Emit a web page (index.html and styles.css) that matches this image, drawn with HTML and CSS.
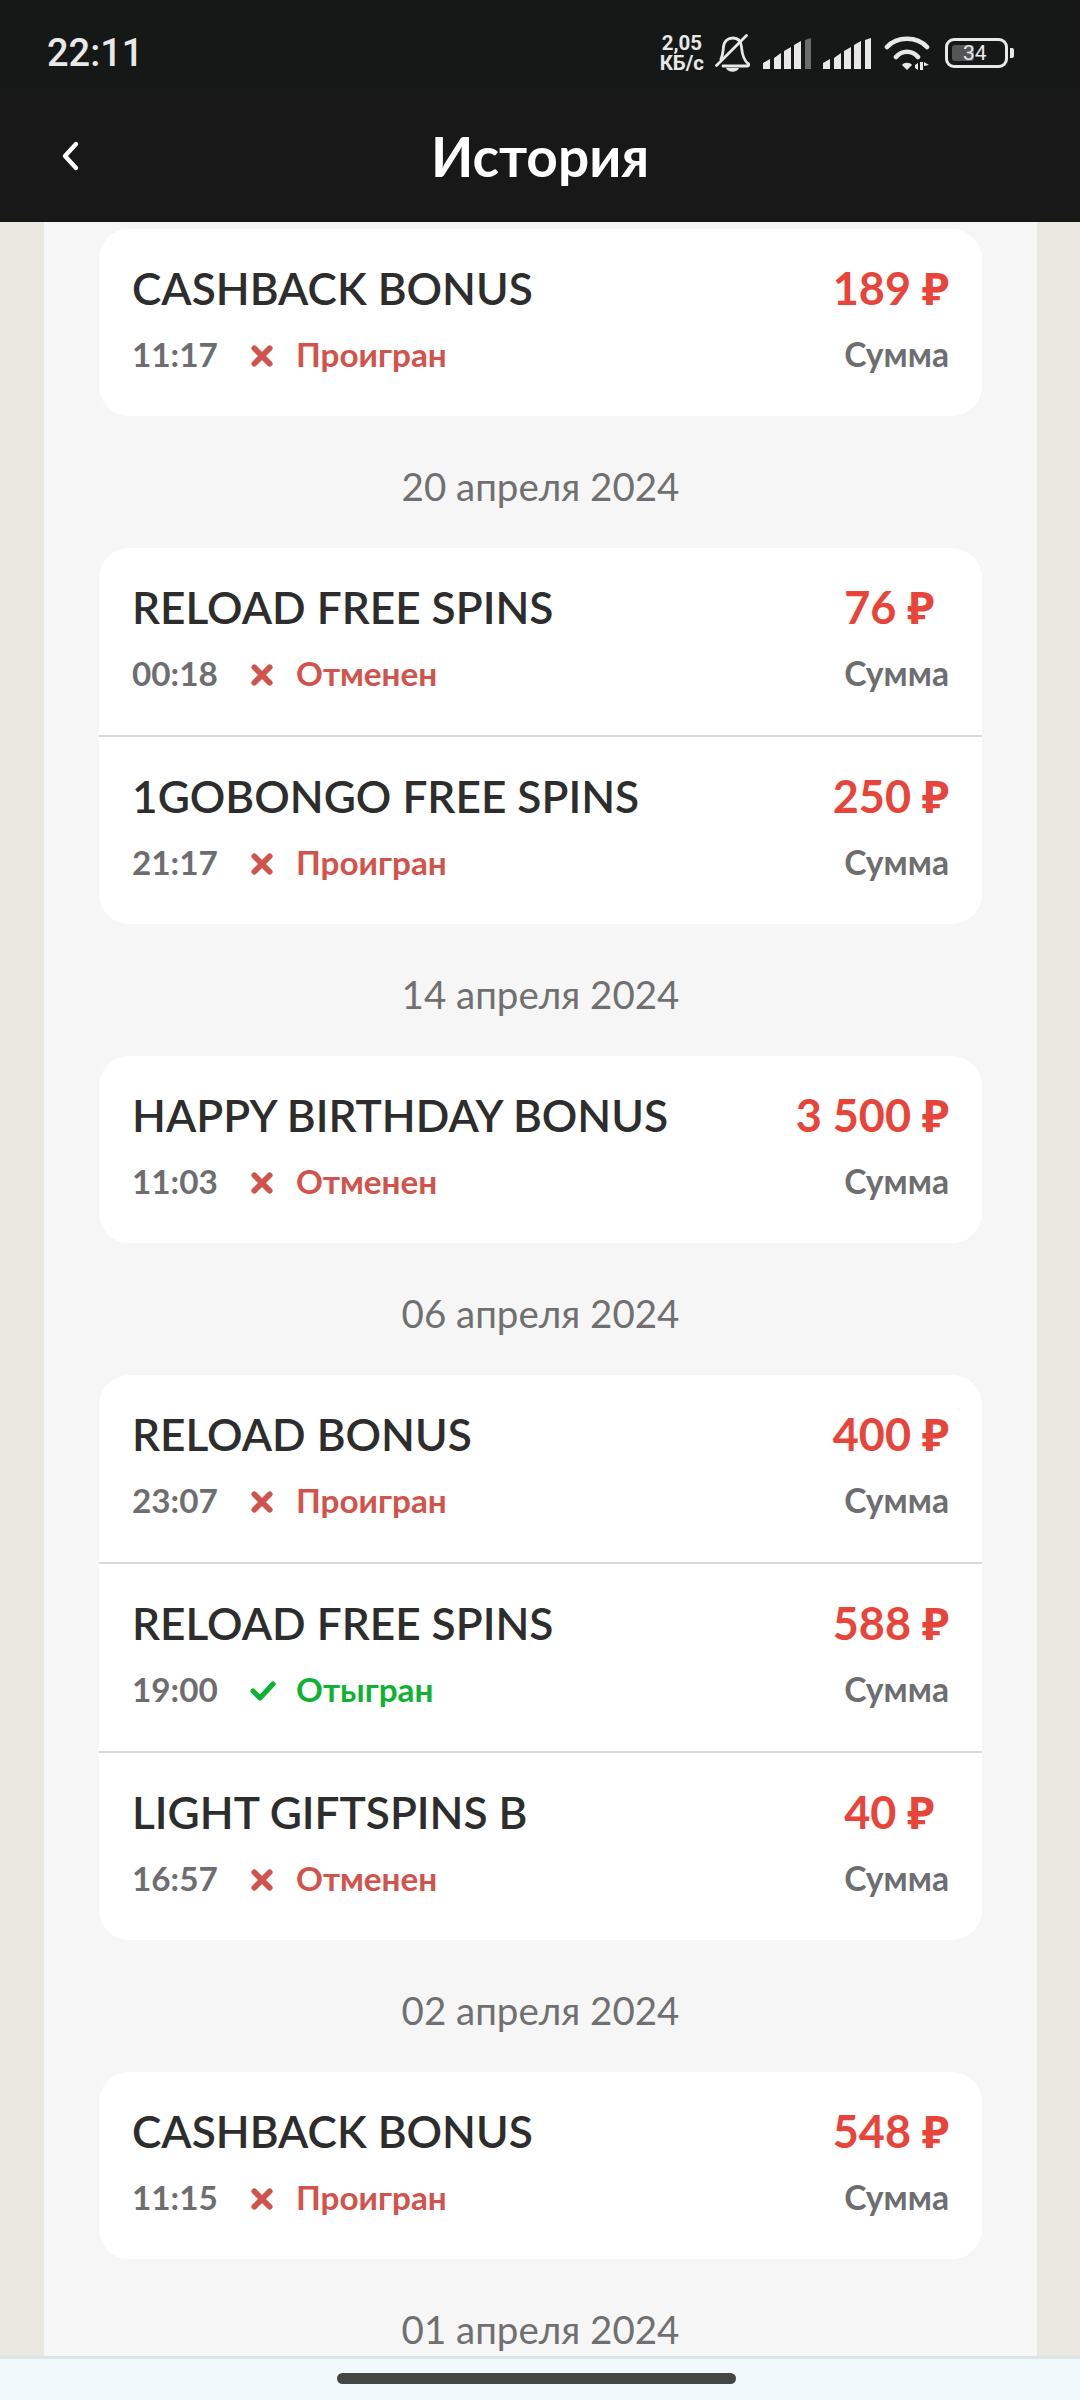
FILE: index.html
```html
<!DOCTYPE html>
<html lang="ru">

<head>
    <meta charset="UTF-8">
    <meta name="viewport" content="width=device-width, initial-scale=1.0">
    <title>История</title>

    <link rel="stylesheet" href="styles.css">
</head>

<body>
    <svg class="defs" width="0" height="0">
        <symbol id="icon-cross" viewBox="0 0 20 20">
            <path d="M3 3 L17 17 M17 3 L3 17" fill="none" stroke="currentColor" stroke-width="5.200" stroke-linecap="round" />
        </symbol>
        <symbol id="icon-check" viewBox="0 0 26 22">
            <path d="M3 11 L10 18 L23 4" fill="none" stroke="currentColor" stroke-width="5.200" stroke-linecap="round" stroke-linejoin="round" />
        </symbol>
    </svg>

    <!-- Status bar -->
    <div class="status-bar">
        <span class="clock">22:11</span>
        <div class="status-icons">
            <div class="speed">2,05<br>КБ/с</div>
            <svg class="icon-bell" width="35" height="38" viewBox="0 0 35 38">
                <path d="M6 25 C8 21 8 17 8.500 13 C9 7 13 4 18 4 C23 4 26 7 26.500 13 C27 19 28 26 33.500 30 C34 31 33.500 32 32.500 32 L8 32" fill="none" stroke="#e8e8e8" stroke-width="2.800" stroke-linecap="round" />
                <path d="M11 34 L24 34 C22 39 13 39 11 34 Z" fill="#e8e8e8" />
                <path d="M1.500 31.500 L31.500 1.500" stroke="#e8e8e8" stroke-width="2.800" stroke-linecap="round" />
            </svg>
            <svg class="icon-signal" width="49" height="31" viewBox="0 0 49 31">
                <path d="M0 25 L7 21 L7 31 L0 31 Z M11 20 L18 15 L18 31 L11 31 Z M21 13 L28 9 L28 31 L21 31 Z M31 7 L38 3 L38 31 L31 31 Z" fill="#e8e8e8" />
                <path d="M42 2 L48 0 L48 31 L42 31 Z" fill="#6b6c6c" />
            </svg>
            <svg class="icon-signal" width="49" height="31" viewBox="0 0 49 31">
                <path d="M0 25 L7 21 L7 31 L0 31 Z M11 20 L18 15 L18 31 L11 31 Z M21 13 L28 9 L28 31 L21 31 Z M31 7 L38 3 L38 31 L31 31 Z M42 2 L48 0 L48 31 L42 31 Z" fill="#e8e8e8" />
            </svg>
            <svg class="icon-wifi" width="46" height="36" viewBox="0 0 46 36">
                <path d="M3 12 C13 1 33 1 43 12 M12 22 C18 15 28 15 34 22" fill="none" stroke="#e8e8e8" stroke-width="4.600" stroke-linecap="round" />
                <path d="M18 30 C20 27 26 27 28 30 L23 35 Z" fill="#e8e8e8" />
                <path d="M31 30 L34 28 L34 35 L31 33 Z M36 27 L39 27 L39 35 L36 35 Z M40 27 L45 30 L40 31 Z" fill="#e8e8e8" />
            </svg>
            <div class="battery">
                <div class="battery-body">
                    <div class="battery-level"></div>
                    <span class="battery-text">34</span>
                </div>
                <div class="battery-nub"></div>
            </div>
        </div>
    </div>

    <!-- Header -->
    <div class="header">
        <svg class="back" width="20" height="32" viewBox="0 0 20 32">
            <path d="M15 4 L4 16 L15 28" fill="none" stroke="#fff" stroke-width="4.400" stroke-linecap="round" stroke-linejoin="round" />
        </svg>
        <h1>История</h1>
    </div>

    <!-- History list -->
    <div class="content">
        <div class="panel">
            <div class="card">
                <div class="row">
                    <div class="row-left">
                        <div class="name">CASHBACK BONUS</div>
                        <div class="meta"><span class="time">11:17</span><span class="status lost"><svg class="status-icon"><use href="#icon-cross" /></svg>Проигран</span></div>
                    </div>
                    <div class="row-right">
                        <div class="amount">189 ₽</div>
                        <div class="label">Сумма</div>
                    </div>
                </div>
            </div>

            <div class="date">20 апреля 2024</div>
            <div class="card">
                <div class="row">
                    <div class="row-left">
                        <div class="name">RELOAD FREE SPINS</div>
                        <div class="meta"><span class="time">00:18</span><span class="status lost"><svg class="status-icon"><use href="#icon-cross" /></svg>Отменен</span></div>
                    </div>
                    <div class="row-right">
                        <div class="amount">76 ₽</div>
                        <div class="label">Сумма</div>
                    </div>
                </div>
                <div class="row">
                    <div class="row-left">
                        <div class="name">1GOBONGO FREE SPINS</div>
                        <div class="meta"><span class="time">21:17</span><span class="status lost"><svg class="status-icon"><use href="#icon-cross" /></svg>Проигран</span></div>
                    </div>
                    <div class="row-right">
                        <div class="amount">250 ₽</div>
                        <div class="label">Сумма</div>
                    </div>
                </div>
            </div>

            <div class="date">14 апреля 2024</div>
            <div class="card">
                <div class="row">
                    <div class="row-left">
                        <div class="name">HAPPY BIRTHDAY BONUS</div>
                        <div class="meta"><span class="time">11:03</span><span class="status lost"><svg class="status-icon"><use href="#icon-cross" /></svg>Отменен</span></div>
                    </div>
                    <div class="row-right">
                        <div class="amount">3 500 ₽</div>
                        <div class="label">Сумма</div>
                    </div>
                </div>
            </div>

            <div class="date">06 апреля 2024</div>
            <div class="card">
                <div class="row">
                    <div class="row-left">
                        <div class="name">RELOAD BONUS</div>
                        <div class="meta"><span class="time">23:07</span><span class="status lost"><svg class="status-icon"><use href="#icon-cross" /></svg>Проигран</span></div>
                    </div>
                    <div class="row-right">
                        <div class="amount">400 ₽</div>
                        <div class="label">Сумма</div>
                    </div>
                </div>
                <div class="row">
                    <div class="row-left">
                        <div class="name">RELOAD FREE SPINS</div>
                        <div class="meta"><span class="time">19:00</span><span class="status won"><svg class="status-icon check"><use href="#icon-check" /></svg>Отыгран</span></div>
                    </div>
                    <div class="row-right">
                        <div class="amount">588 ₽</div>
                        <div class="label">Сумма</div>
                    </div>
                </div>
                <div class="row">
                    <div class="row-left">
                        <div class="name">LIGHT GIFTSPINS B</div>
                        <div class="meta"><span class="time">16:57</span><span class="status lost"><svg class="status-icon"><use href="#icon-cross" /></svg>Отменен</span></div>
                    </div>
                    <div class="row-right">
                        <div class="amount">40 ₽</div>
                        <div class="label">Сумма</div>
                    </div>
                </div>
            </div>

            <div class="date">02 апреля 2024</div>
            <div class="card">
                <div class="row">
                    <div class="row-left">
                        <div class="name">CASHBACK BONUS</div>
                        <div class="meta"><span class="time">11:15</span><span class="status lost"><svg class="status-icon"><use href="#icon-cross" /></svg>Проигран</span></div>
                    </div>
                    <div class="row-right">
                        <div class="amount">548 ₽</div>
                        <div class="label">Сумма</div>
                    </div>
                </div>
            </div>

            <div class="date">01 апреля 2024</div>
        </div>
    </div>

    <!-- Gesture bar -->
    <div class="nav-bar">
        <div class="nav-pill"></div>
    </div>
</body>

</html>
```

FILE: styles.css
```css
* {
    box-sizing: border-box;
}

html,
body {
    height: 2400px;
}

body {
    font-family: Lato, "Noto Sans", sans-serif;
    margin: 0;
    padding: 0;
    background-color: #e9e7e0;
    color: #2d2d2d;
    display: flex;
    flex-direction: column;
    overflow: hidden;
}

.defs {
    position: absolute;
}

.status-bar {
    height: 90px;
    flex-shrink: 0;
    padding: 16px 66px 0 47px;
    background-color: #161818;
    color: #e8e8e8;
    display: flex;
    justify-content: space-between;
    align-items: center;
}

.clock {
    font-family: Roboto, sans-serif;
    font-size: 38px;
    font-weight: 500;
}

.status-icons {
    display: flex;
    align-items: center;
}

.speed {
    font-family: Roboto, sans-serif;
    font-size: 20.500px;
    line-height: 20px;
    font-weight: 700;
    text-align: center;
    margin-right: 11px;
}

.icon-bell {
    margin-right: 13px;
}

.icon-signal {
    margin-right: 11px;
}

.icon-wifi {
    margin-left: 1px;
    margin-right: 15px;
}

.battery {
    display: flex;
    align-items: center;
    gap: 2px;
}

.battery-body {
    width: 63px;
    height: 30px;
    border: 3px solid #e8e8e8;
    border-radius: 9px;
    padding: 4px;
    display: flex;
    position: relative;
}

.battery-level {
    background-color: #555;
    border-radius: 3px;
    width: 22px;
}

.battery-text {
    position: absolute;
    left: 15px;
    top: -1px;
    font-family: Roboto, sans-serif;
    font-size: 21px;
    line-height: 26px;
}

.battery-nub {
    width: 4px;
    height: 10px;
    background-color: #e8e8e8;
    border-radius: 0 2px 2px 0;
}

.header {
    height: 132px;
    flex-shrink: 0;
    background-color: #181818;
    display: flex;
    align-items: center;
    justify-content: center;
    position: relative;
}

.header h1 {
    margin: 0;
    color: #fff;
    font-size: 55px;
    font-weight: 700;
    line-height: 1;
}

.back {
    position: absolute;
    left: 61px;
    top: 50px;
}

.content {
    flex: 1;
    min-height: 0;
    overflow: hidden;
}

.panel {
    width: 993px;
    margin-left: 44px;
    padding: 7px 55px 0;
    background-color: #f6f6f6;
    min-height: 100%;
}

.card {
    background-color: #fff;
    border-radius: 30px;
    overflow: hidden;
}

.row {
    height: 187px;
    padding: 32px 33px 0;
    display: flex;
    justify-content: space-between;
}

.row + .row {
    height: 189px;
    border-top: 2px solid #d5dadc;
}

.row-left,
.row-right {
    display: flex;
    flex-direction: column;
}

.name,
.amount {
    font-size: 44.200px;
    line-height: 54px;
    font-weight: 600;
}

.amount {
    color: #e9443a;
    align-self: flex-start;
    font-size: 45px;
    font-weight: 700;
}

.meta {
    margin-top: 18px;
    display: flex;
    align-items: center;
    height: 42px;
    font-size: 33.300px;
    font-weight: 700;
}

.time {
    color: #6e6e70;
    width: 118px;
}

.status {
    display: flex;
    align-items: center;
}

.status-icon {
    width: 24px;
    height: 22px;
    margin: 4px 22px 0 0;
}

.status-icon.check {
    width: 26px;
    margin-right: 20px;
}

.lost {
    color: #d2534b;
}

.won {
    color: #0fb233;
}

.label {
    margin-top: 18px;
    height: 42px;
    line-height: 42px;
    font-size: 33.700px;
    font-weight: 700;
    color: #6e6e70;
    align-self: flex-end;
}

.date {
    height: 132px;
    line-height: 132px;
    padding-top: 4px;
    text-align: center;
    font-size: 38.500px;
    color: #707070;
}

.nav-bar {
    height: 44px;
    flex-shrink: 0;
    background-color: #f0f9fb;
    border-top: 3px solid #dbe5e5;
    display: flex;
    justify-content: center;
    padding: 14px 7px 0 0;
}

.nav-pill {
    width: 399px;
    height: 11px;
    background-color: #444644;
    border-radius: 6px;
}
```
